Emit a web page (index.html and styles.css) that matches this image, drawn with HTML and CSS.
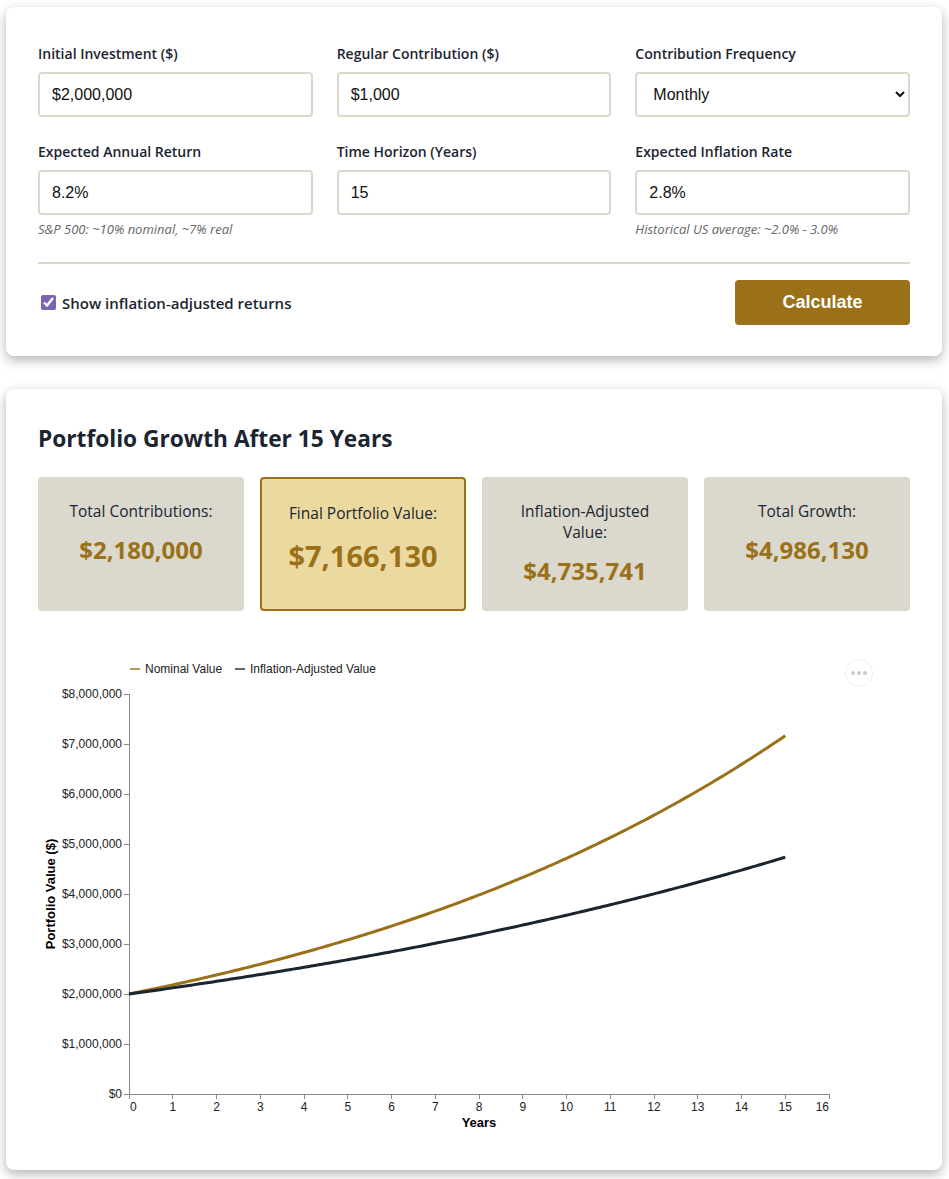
FILE: index.html
```html
<!DOCTYPE html>
<html lang="en">
<head>
    <meta charset="UTF-8">
    <meta name="viewport" content="width=device-width, initial-scale=1.0">
    <title>Investment Growth Calculator</title>
    <link rel="stylesheet" href="styles.css">
</head>
<body>

    <!-- Inputs -->
    <div class="card calc-card">
        <div class="form-grid">
            <div class="form-group">
                <label for="initial">Initial Investment ($)</label>
                <input type="text" id="initial" value="$2,000,000">
            </div>
            <div class="form-group">
                <label for="contribution">Regular Contribution ($)</label>
                <input type="text" id="contribution" value="$1,000">
            </div>
            <div class="form-group">
                <label for="frequency">Contribution Frequency</label>
                <select id="frequency">
                    <option>Monthly</option>
                    <option>Quarterly</option>
                    <option>Annually</option>
                </select>
            </div>
            <div class="form-group">
                <label for="return">Expected Annual Return</label>
                <input type="text" id="return" value="8.2%">
                <p class="hint">S&amp;P 500: ~10% nominal, ~7% real</p>
            </div>
            <div class="form-group">
                <label for="years">Time Horizon (Years)</label>
                <input type="text" id="years" value="15">
            </div>
            <div class="form-group">
                <label for="inflation">Expected Inflation Rate</label>
                <input type="text" id="inflation" value="2.8%">
                <p class="hint">Historical US average: ~2.0% - 3.0%</p>
            </div>
        </div>
        <div class="form-actions">
            <label class="check-label"><input type="checkbox" checked> Show inflation-adjusted returns</label>
            <button type="button" class="calc-button">Calculate</button>
        </div>
    </div>

    <!-- Results -->
    <div class="card results-card">
        <h2>Portfolio Growth After 15 Years</h2>
        <div class="stats">
            <div class="stat">
                <div class="stat-label">Total Contributions:</div>
                <div class="stat-value">$2,180,000</div>
            </div>
            <div class="stat stat-main">
                <div class="stat-label">Final Portfolio Value:</div>
                <div class="stat-value">$7,166,130</div>
            </div>
            <div class="stat">
                <div class="stat-label">Inflation-Adjusted Value:</div>
                <div class="stat-value">$4,735,741</div>
            </div>
            <div class="stat">
                <div class="stat-label">Total Growth:</div>
                <div class="stat-value">$4,986,130</div>
            </div>
        </div>
        <div class="chart-wrap">
            <svg id="chart" width="872" height="500"></svg>
            <button type="button" class="chart-menu"><span></span><span></span><span></span></button>
        </div>
    </div>

    <script>
        const NS = 'http://www.w3.org/2000/svg';
        const svg = document.getElementById('chart');

        const initial = 2000000, monthly = 1000, rate = 0.082, inflation = 0.028, years = 15;
        const x0 = 91, xStep = 43.75, yBottom = 454, yScale = 50 / 1000000;

        function el(name, attrs, text) {
            const node = document.createElementNS(NS, name);
            for (const k in attrs) node.setAttribute(k, attrs[k]);
            if (text !== undefined) node.textContent = text;
            svg.appendChild(node);
            return node;
        }

        // build monthly values
        const nominal = [], real = [];
        let value = initial;
        for (let m = 0; m <= years * 12; m++) {
            if (m > 0) value = value * (1 + rate / 12) + monthly;
            nominal.push([m / 12, value]);
            real.push([m / 12, value / Math.pow(1 + inflation, m / 12)]);
        }

        function toPath(points) {
            return points.map((p, i) => (i ? 'L' : 'M') + (x0 + p[0] * xStep).toFixed(2) + ',' + (yBottom - p[1] * yScale).toFixed(2)).join('');
        }

        // y axis
        el('line', { x1: x0, y1: yBottom - 400, x2: x0, y2: yBottom, class: 'axis' });
        for (let i = 0; i <= 8; i++) {
            const y = yBottom - i * 50;
            el('line', { x1: x0 - 5, y1: y, x2: x0, y2: y, class: 'axis' });
            el('text', { x: x0 - 7, y: y + 4, 'text-anchor': 'end', class: 'tick-label' }, '$' + (i * 1000000).toLocaleString('en-US'));
        }

        // x axis
        el('line', { x1: x0, y1: yBottom, x2: x0 + 16 * xStep, y2: yBottom, class: 'axis' });
        for (let i = 0; i <= 16; i++) {
            const x = x0 + i * xStep;
            el('line', { x1: x, y1: yBottom, x2: x, y2: yBottom + 5, class: 'axis' });
            const anchor = i === 0 ? 'start' : (i === 16 ? 'end' : 'middle');
            el('text', { x: i === 0 ? x + 1 : x, y: yBottom + 17, 'text-anchor': anchor, class: 'tick-label' }, i);
        }

        el('text', { x: x0 + 8 * xStep, y: 487, 'text-anchor': 'middle', class: 'axis-title' }, 'Years');
        el('text', { x: 0, y: 0, 'text-anchor': 'middle', class: 'axis-title', transform: 'translate(17,254) rotate(-90)' }, 'Portfolio Value ($)');

        // legend
        el('line', { x1: 92, y1: 29, x2: 102, y2: 29, class: 'legend-nominal' });
        el('text', { x: 107, y: 33, class: 'legend-text' }, 'Nominal Value');
        el('line', { x1: 197, y1: 29, x2: 207, y2: 29, class: 'legend-real' });
        el('text', { x: 212, y: 33, class: 'legend-text' }, 'Inflation-Adjusted Value');

        // lines
        el('path', { d: toPath(nominal), class: 'line-nominal' });
        el('path', { d: toPath(real), class: 'line-real' });
    </script>

</body>
</html>
```

FILE: styles.css
```css
body {
    font-family: "Open Sans", "Noto Sans", sans-serif;
    background-color: #fff;
    color: #1a2530;
    margin: 0;
    padding: 7px 7px 9px 6px;
}
.card {
    background-color: #fff;
    border-radius: 8px;
    box-shadow: 0 4px 12px rgba(0, 0, 0, 0.3);
}
.calc-card {
    padding: 37px 32px 31px;
    margin-bottom: 33px;
}
.form-grid {
    display: grid;
    grid-template-columns: repeat(3, 1fr);
    column-gap: 24px;
    row-gap: 25px;
}
.form-group label {
    display: block;
    font-size: 14px;
    font-weight: 600;
    line-height: 20px;
    margin-bottom: 8px;
}
.form-group input, .form-group select {
    display: block;
    width: 100%;
    height: 45px;
    box-sizing: border-box;
    padding: 0 12px;
    border: 2px solid #dcd8cc;
    border-radius: 4px;
    font-family: "Liberation Sans", Arial, sans-serif;
    font-size: 16px;
    color: #111;
    background-color: #fff;
}
.hint {
    margin: 6px 0 0;
    font-size: 13px;
    font-style: italic;
    line-height: 16px;
    color: #666;
}
.form-actions {
    display: flex;
    justify-content: space-between;
    align-items: center;
    margin-top: 25px;
    padding-top: 16px;
    border-top: 2px solid #dcd8cc;
}
.check-label {
    display: flex;
    align-items: center;
    gap: 6px;
    font-size: 15px;
    font-weight: 600;
    padding-left: 3px;
}
.check-label input {
    margin: 0;
    width: 15px;
    height: 15px;
    accent-color: #7b65b0;
}
.calc-button {
    width: 175px;
    height: 45px;
    background-color: #9a7118;
    color: #fff;
    border: none;
    border-radius: 4px;
    font-family: "Liberation Sans", Arial, sans-serif;
    font-size: 18px;
    font-weight: bold;
    cursor: pointer;
}
.results-card {
    padding: 36px 32px 30px;
}
h2 {
    margin: 0 0 24px;
    font-size: 22.7px;
    line-height: 28px;
    font-weight: 700;
}
.stats {
    display: grid;
    grid-template-columns: repeat(4, 1fr);
    gap: 16px;
}
.stat {
    background-color: #dbd8cd;
    border-radius: 4px;
    padding: 24px 16px;
    text-align: center;
}
.stat-label {
    font-size: 15.5px;
    font-weight: 500;
    line-height: 21px;
    margin-bottom: 12px;
}
.stat-value {
    font-size: 24px;
    font-weight: 700;
    line-height: 32px;
    color: #9a7118;
}
.stat-main {
    background-color: #ecd9a0;
    border: 2px solid #9a7118;
}
.stat-main .stat-value {
    font-size: 29px;
    line-height: 40px;
}
.chart-wrap {
    position: relative;
    margin-top: 29px;
    height: 500px;
}
#chart {
    display: block;
    font-family: "Liberation Sans", Arial, sans-serif;
}
.axis {
    stroke: #888;
    stroke-width: 1;
    shape-rendering: crispEdges;
}
.tick-label, .legend-text {
    font-size: 12px;
    fill: #222;
}
.axis-title {
    font-size: 13px;
    font-weight: bold;
    fill: #000;
}
.legend-nominal, .legend-real {
    stroke-width: 2;
    opacity: 0.7;
}
.legend-nominal, .line-nominal {
    stroke: #9a7118;
}
.legend-real, .line-real {
    stroke: #1a2530;
}
.line-nominal, .line-real {
    fill: none;
    stroke-width: 3;
}
.chart-menu {
    position: absolute;
    left: 807px;
    top: 19px;
    width: 28px;
    height: 28px;
    padding: 0;
    border: 1px solid #eee;
    border-radius: 50%;
    background-color: #fff;
    display: flex;
    justify-content: center;
    align-items: center;
    gap: 2px;
}
.chart-menu span {
    width: 4px;
    height: 4px;
    border-radius: 50%;
    background-color: #ccc;
}
```
